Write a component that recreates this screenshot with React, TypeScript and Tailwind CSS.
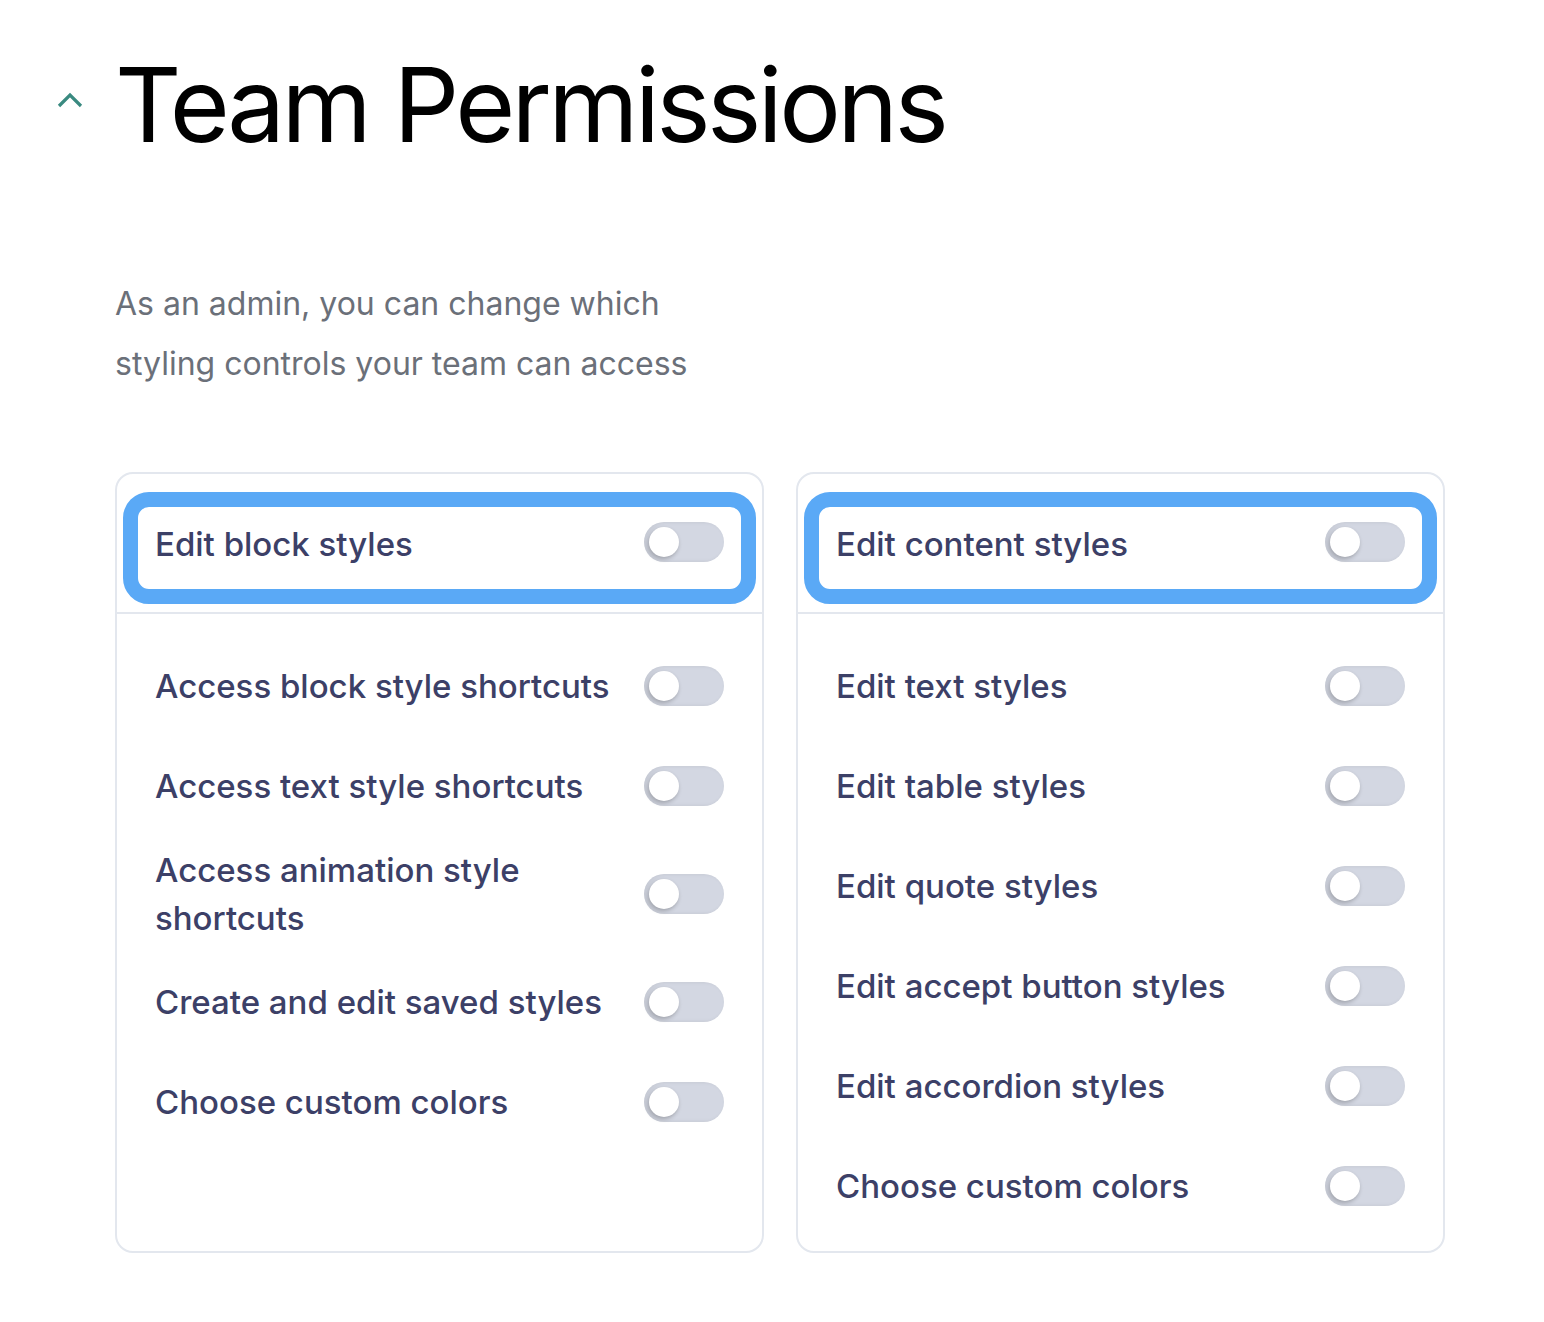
const leftItems = [
  "Access block style shortcuts",
  "Access text style shortcuts",
  "Access animation style shortcuts",
  "Create and edit saved styles",
  "Choose custom colors",
];

const rightItems = [
  "Edit text styles",
  "Edit table styles",
  "Edit quote styles",
  "Edit accept button styles",
  "Edit accordion styles",
  "Choose custom colors",
];

function Toggle({ className = "" }: { className?: string }) {
  return (
    <div className={`relative h-[40px] w-[80px] shrink-0 rounded-full bg-[#d3d7e2] shadow-[inset_2px_0_4px_rgba(0,0,0,0.08)] ${className}`}>
      <div className="absolute left-[5px] top-[5px] h-[30px] w-[30px] rounded-full bg-white shadow-[-1px_2px_4px_rgba(0,0,0,0.25)]" />
    </div>
  );
}

function Card({ title, items }: { title: string; items: string[] }) {
  return (
    <div className="rounded-[18px] border-2 border-[#e3e7ee] bg-white">
      <div className="mx-[6px] mt-[18px] rounded-[26px] border-[15px] border-[#5aa9f6]">
        <div className="flex h-[82px] items-center justify-between px-[17px]">
          <span className="mb-[6px] text-[33px] font-medium text-[#3c4067]">{title}</span>
          <Toggle className="mb-[12px]" />
        </div>
      </div>
      <div className="mt-[8px] border-t-2 border-[#e3e7ee]" />
      <div className="px-[38px] pt-[22px] pb-[15px]">
        {items.map((item) => (
          <div key={item} className="flex min-h-[100px] items-center justify-between gap-[24px] py-[10px]">
            <span className="max-w-[465px] text-[33px] font-medium leading-[48px] text-[#3c4067]">{item}</span>
            <Toggle />
          </div>
        ))}
      </div>
    </div>
  );
}

export default function App() {
  return (
    <div className="min-h-[1322px] bg-white font-['Inter',sans-serif]">
      <div className="flex items-start pl-[57px] pt-[53px]">
        <svg className="mt-[39px] h-[16px] w-[26px] shrink-0" viewBox="0 0 26 16" fill="none">
          <path d="M2 14 L13 3 L24 14" stroke="#3a8a80" strokeWidth="3.2" />
        </svg>
        <h1 className="ml-[32px] text-[103px] font-normal leading-none tracking-[-0.035em] text-black">
          Team Permissions
        </h1>
      </div>
      <div className="pl-[115px]">
        <p className="mt-[118px] text-[32px] leading-[60px] text-[#6b7079]">
          As an admin, you can change which
          <br />
          styling controls your team can access
        </p>
        <div className="mt-[78px] grid w-[1330px] grid-cols-2 gap-[32px]">
          <Card title="Edit block styles" items={leftItems} />
          <Card title="Edit content styles" items={rightItems} />
        </div>
      </div>
    </div>
  );
}
